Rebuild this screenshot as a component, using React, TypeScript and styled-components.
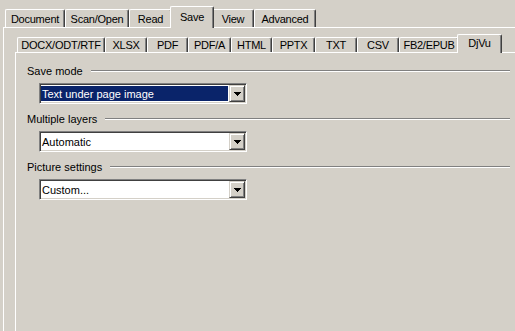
import React from "react";
import styled, {createGlobalStyle, css} from "styled-components";

const GlobalStyle = createGlobalStyle`
  html, body {
    margin: 0;
    padding: 0;
    background: #d4d0c8;
    overflow: hidden;
  }
  body {
    font-family: "Liberation Sans", Arial, sans-serif;
    font-size: 11px;
    color: #000;
  }
`

const Window = styled.div`
  width: 515px;
  height: 331px;
  overflow: hidden;
  box-sizing: border-box;
  padding: 6px 0 0 3px;
  background: #d4d0c8;
`
const TabStrip = styled.div<{ $height: number }>`
  display: flex;
  align-items: flex-end;
  height: ${({$height}) => $height}px;
  padding-left: 2px;
`
const Tab = styled.div<{ $w: number, $h: number, $active?: boolean }>`
  box-sizing: border-box;
  width: ${({$w}) => $w}px;
  height: ${({$h}) => $h}px;
  display: flex;
  align-items: center;
  justify-content: center;
  white-space: nowrap;
  letter-spacing: -0.25px;
  background: #d4d0c8;
  border-top: 1px solid #fff;
  border-left: 1px solid #fff;
  border-right: 1px solid #404040;
  border-radius: 2px 2px 0 0;
  box-shadow: inset -1px 0 #808080;
  ${({$active, $w, $h}) => $active && css`
    position: relative;
    z-index: 1;
    width: ${$w + 4}px;
    height: ${$h + 4}px;
    margin: 0 -2px -1px;
    padding-bottom: 2px;
  `};
`
const Panel = styled.div<{ $pad: string, $w: number }>`
  box-sizing: border-box;
  width: ${({$w}) => $w}px;
  height: 400px;
  padding: ${({$pad}) => $pad};
  border-top: 1px solid #fff;
  border-left: 1px solid #fff;
`
const Group = styled.div`
  width: 483px;
  display: flex;
  flex-direction: column;
  gap: 8px;
`
const Section = styled.div`
  display: flex;
  flex-direction: column;
`
const GroupLabel = styled.div`
  display: flex;
  align-items: center;
  gap: 8px;
  height: 14px;
  white-space: nowrap;
`
const EtchedLine = styled.div`
  flex: 1;
  height: 0;
  border-top: 1px solid #808080;
  border-bottom: 1px solid #fff;
`
const Combo = styled.div`
  box-sizing: border-box;
  width: 208px;
  height: 21px;
  margin: 5px 0 0 12px;
  display: flex;
  background: #fff;
  border-top: 1px solid #808080;
  border-left: 1px solid #808080;
  border-bottom: 1px solid #fff;
  border-right: 1px solid #fff;
  box-shadow: inset 1px 1px #404040, inset -1px -1px #d4d0c8;
  padding: 1px;
`
const ComboValue = styled.div<{ $focused?: boolean }>`
  flex: 1;
  margin: 1px 1px 1px 0;
  padding-left: 1px;
  display: flex;
  align-items: center;
  white-space: nowrap;
  ${({$focused}) => $focused && css`
    background: #0a246a;
    color: #fff;
  `};
`
const ComboButton = styled.div`
  box-sizing: border-box;
  width: 16px;
  display: flex;
  align-items: center;
  justify-content: center;
  background: #d4d0c8;
  border-top: 1px solid #d4d0c8;
  border-left: 1px solid #d4d0c8;
  border-bottom: 1px solid #404040;
  border-right: 1px solid #404040;
  box-shadow: inset 1px 1px #fff, inset -1px -1px #808080;
`

const Arrow = () => (
    <svg width="7" height="4" viewBox="0 0 7 4" shapeRendering="crispEdges">
        <rect x="0" y="0" width="7" height="1" fill="#000"/>
        <rect x="1" y="1" width="5" height="1" fill="#000"/>
        <rect x="2" y="2" width="3" height="1" fill="#000"/>
        <rect x="3" y="3" width="1" height="1" fill="#000"/>
    </svg>
)

const mainTabs = [
    {label: "Document", w: 60},
    {label: "Scan/Open", w: 64},
    {label: "Read", w: 43},
    {label: "Save", w: 40, active: true},
    {label: "View", w: 42},
    {label: "Advanced", w: 62},
]
const formatTabs = [
    {label: "DOCX/ODT/RTF", w: 88},
    {label: "XLSX", w: 42},
    {label: "PDF", w: 41},
    {label: "PDF/A", w: 43},
    {label: "HTML", w: 41},
    {label: "PPTX", w: 43},
    {label: "TXT", w: 42},
    {label: "CSV", w: 42},
    {label: "FB2/EPUB", w: 60},
    {label: "DjVu", w: 41, active: true},
]
const settings = [
    {title: "Save mode", value: "Text under page image", focused: true},
    {title: "Multiple layers", value: "Automatic"},
    {title: "Picture settings", value: "Custom..."},
]

export default function App() {
    return <>
        <GlobalStyle/>
        <Window>
            <TabStrip $height={21}>
                {mainTabs.map(({label, w, active}) =>
                    <Tab key={label} $w={w} $h={18} $active={active}>{label}</Tab>
                )}
            </TabStrip>
            <Panel $w={620} $pad="6px 0 0 11px">
                <TabStrip $height={18}>
                    {formatTabs.map(({label, w, active}) =>
                        <Tab key={label} $w={w} $h={15} $active={active}>{label}</Tab>
                    )}
                </TabStrip>
                <Panel $w={600} $pad="11px 0 0 11px">
                    <Group>
                        {settings.map(({title, value, focused}) =>
                            <Section key={title}>
                                <GroupLabel>
                                    {title}
                                    <EtchedLine/>
                                </GroupLabel>
                                <Combo>
                                    <ComboValue $focused={focused}>{value}</ComboValue>
                                    <ComboButton><Arrow/></ComboButton>
                                </Combo>
                            </Section>
                        )}
                    </Group>
                </Panel>
            </Panel>
        </Window>
    </>
}
